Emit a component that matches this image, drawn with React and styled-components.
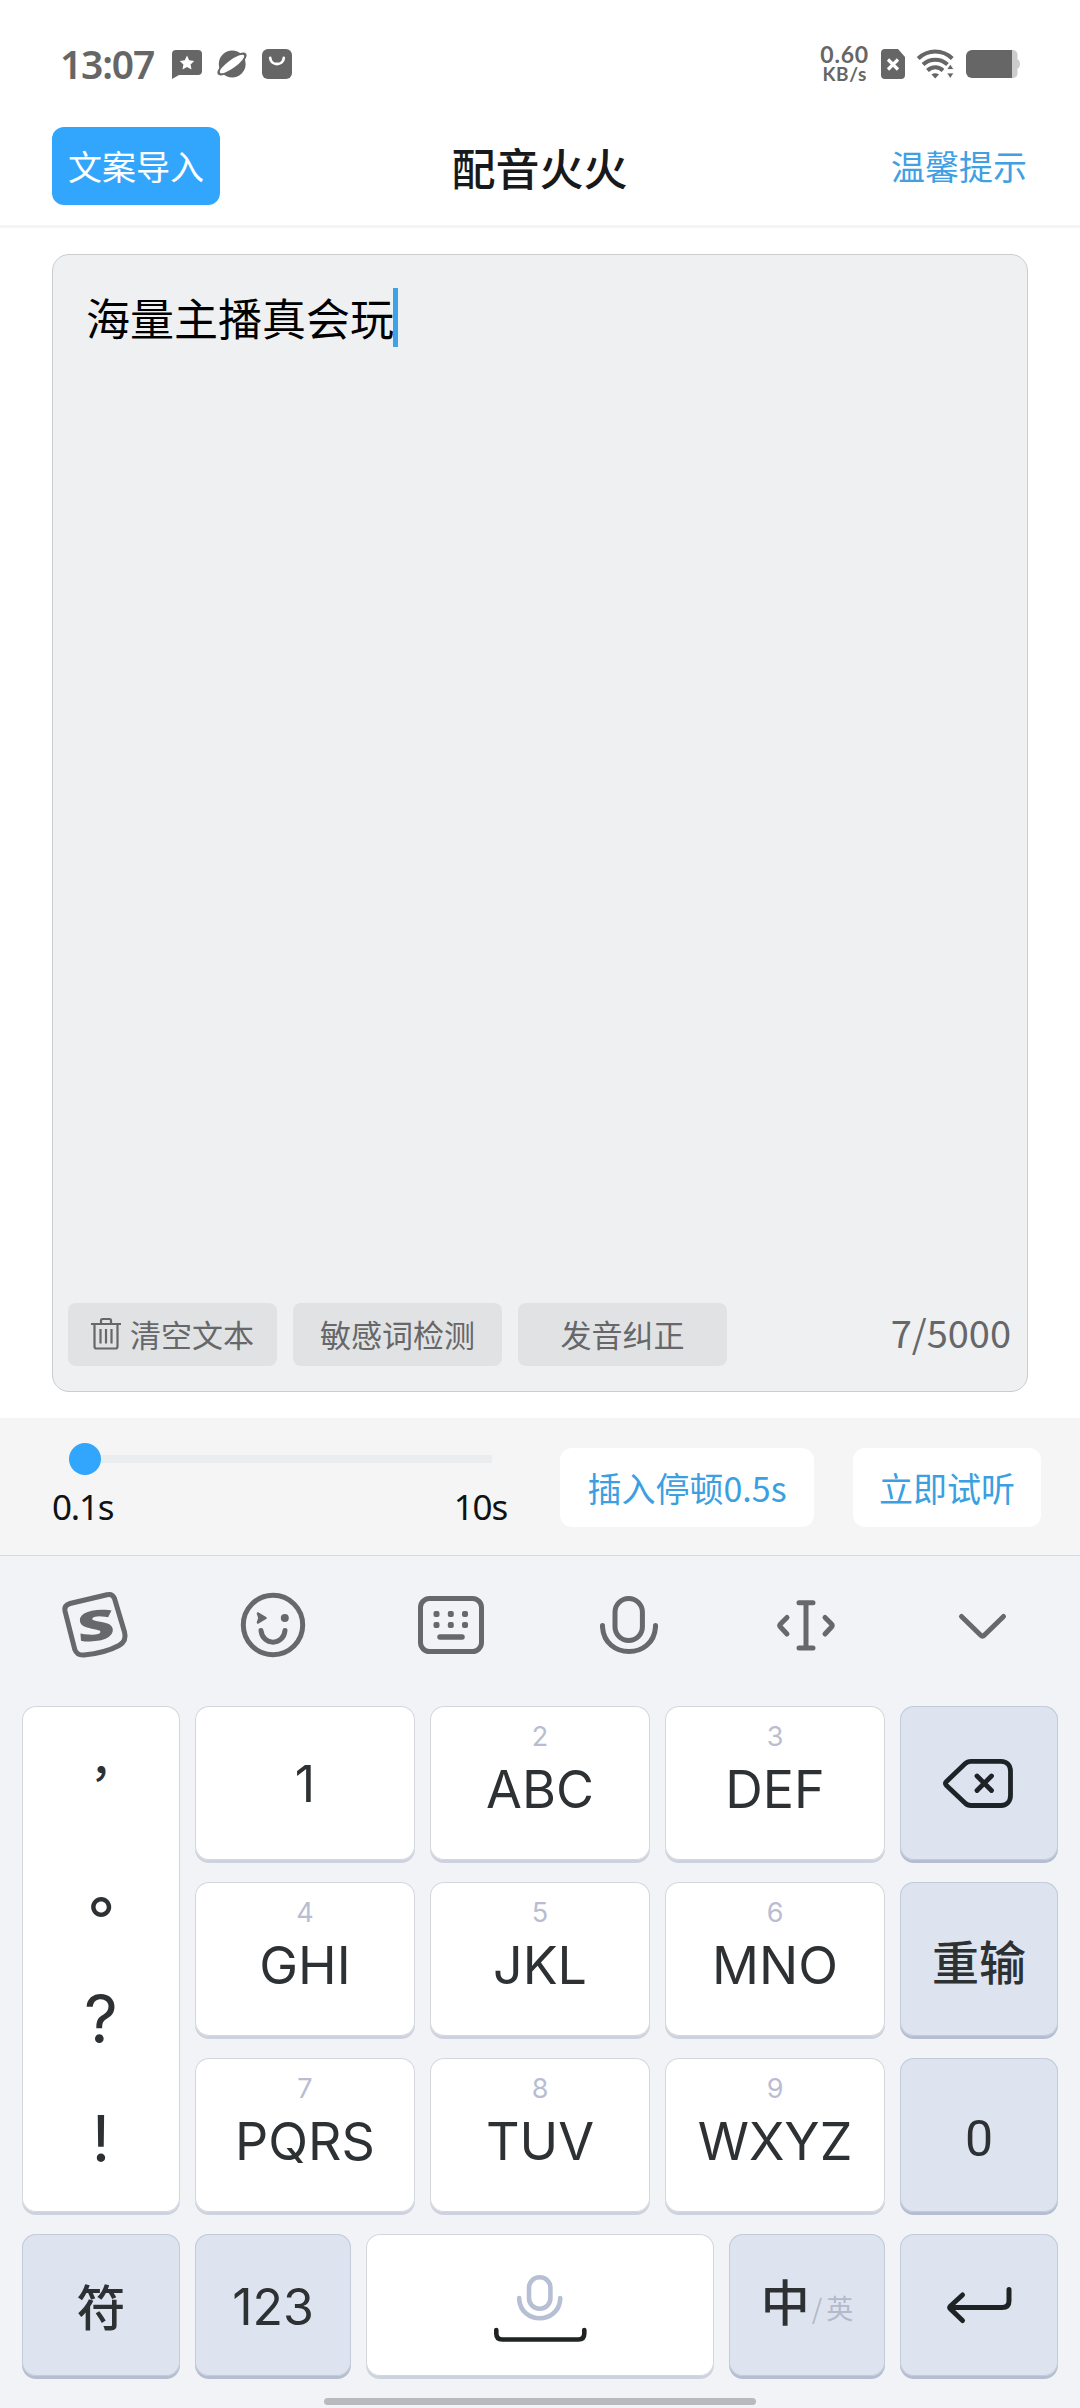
import React from 'react';
import styled, { createGlobalStyle } from 'styled-components';

const GlobalStyle = createGlobalStyle`
  * {
    box-sizing: border-box;
  }

  body {
    margin: 0;
    background: #fff;
    font-family: 'Noto Sans CJK SC', sans-serif;
  }
`;

const Screen = styled.div`
  width: 1080px;
  height: 2408px;
  display: flex;
  flex-direction: column;
  overflow: hidden;
`;

const Icon = styled.svg`
  display: block;
  flex: none;
  overflow: visible;
`;

/* status bar */

const StatusBar = styled.div`
  height: 107px;
  padding: 21px 60px 0 60px;
  display: flex;
  align-items: center;
  justify-content: space-between;
  color: #666;
`;

const StatusGroup = styled.div`
  display: flex;
  align-items: center;
  gap: ${(props) => props.$gap}px;
`;

const Clock = styled.span`
  width: 97px;
  font-family: 'Noto Sans', sans-serif;
  font-size: 39px;
  font-weight: 600;
  line-height: 40px;
  letter-spacing: -1.2px;
  white-space: nowrap;
`;

const NetSpeed = styled.div`
  display: flex;
  flex-direction: column;
  align-items: center;
  font-family: Lato, sans-serif;
  font-weight: 700;
  white-space: nowrap;
`;

const SpeedValue = styled.span`
  font-size: 23px;
  line-height: 20px;
  letter-spacing: 0.8px;
`;

const SpeedUnit = styled.span`
  font-size: 19px;
  line-height: 20px;
  letter-spacing: 0.6px;
`;

/* page header */

const Header = styled.header`
  height: 121px;
  padding: 0 53px 0 52px;
  display: grid;
  grid-template-columns: 1fr auto 1fr;
  align-items: center;
  border-bottom: 3px solid #f5f5f5;
`;

const ImportButton = styled.button`
  width: 168px;
  height: 78px;
  padding: 0;
  border: none;
  border-radius: 12px;
  background: #32a6fd;
  color: #fff;
  font-family: inherit;
  font-size: 34px;
  line-height: 40px;
`;

const Title = styled.h1`
  margin: 1px 0 0;
  color: #18191b;
  font-size: 44px;
  font-weight: 500;
  line-height: 50px;
`;

const TipLink = styled.a`
  justify-self: end;
  color: #3fa0e3;
  font-size: 34px;
  line-height: 40px;
`;

/* editor */

const Main = styled.main`
  padding: 26px 52px;
`;

const Editor = styled.section`
  height: 1138px;
  padding: 33px 15px 25px;
  display: flex;
  flex-direction: column;
  justify-content: space-between;
  border: 1px solid #cbccce;
  border-radius: 17px;
  background: #eff0f2;
`;

const EditorText = styled.div`
  height: 59px;
  padding-left: 18px;
  display: flex;
  align-items: center;
  color: #000;
  font-size: 44px;
  line-height: 61px;
`;

const Caret = styled.span`
  width: 5px;
  height: 59px;
  margin-left: -1px;
  background: #3ea2e8;
`;

const EditorFooter = styled.div`
  display: flex;
  align-items: center;
  gap: 16px;
`;

const ToolButton = styled.button`
  width: 209px;
  height: 63px;
  padding: 0 0 1px;
  display: flex;
  align-items: center;
  justify-content: center;
  gap: 9px;
  border: none;
  border-radius: 8px;
  background: #e1e2e4;
  color: #666769;
  font-family: inherit;
  font-size: 31px;
  line-height: 36px;
`;

const Counter = styled.span`
  margin: 0 1px 5px auto;
  color: #666769;
  font-size: 38px;
  line-height: 44px;
`;

/* pause controls */

const PauseBar = styled.section`
  height: 137px;
  padding: 25px 39px 0 52px;
  display: flex;
  background: #f5f5f6;
`;

const SliderBlock = styled.div`
  width: 455px;
  margin-right: 53px;
`;

const Track = styled.div`
  width: 423px;
  height: 32px;
  margin-left: 17px;
  display: flex;
  align-items: center;
  background: linear-gradient(#ebecee, #ebecee) center / 100% 8px no-repeat;
`;

const Thumb = styled.div`
  width: 32px;
  height: 32px;
  border-radius: 50%;
  background: #32a6fd;
`;

const Range = styled.div`
  display: flex;
  justify-content: space-between;
  margin-top: 11px;
  color: #111213;
  font-family: 'Noto Sans', sans-serif;
  font-size: 35px;
  line-height: 42px;
  letter-spacing: -1.2px;
`;

const WhiteButton = styled.button`
  width: ${(props) => props.$width}px;
  height: 79px;
  margin: 5px ${(props) => props.$after || 0}px 0 0;
  padding: 0;
  border: none;
  border-radius: 12px;
  background: #fff;
  color: #3b9fe2;
  font-family: inherit;
  font-size: 34px;
  line-height: 40px;
  white-space: nowrap;
`;

/* keyboard */

const Keyboard = styled.section`
  flex: 1;
  display: flex;
  flex-direction: column;
  align-items: center;
  border-top: 1px solid #d7dade;
  background: #f1f3f7;
`;

const KeyboardTools = styled.div`
  width: 1068px;
  height: 138px;
  display: grid;
  grid-template-columns: repeat(6, 1fr);
  place-items: center;
  color: #66686c;
`;

const Keys = styled.div`
  width: 1036px;
  margin-top: 12px;
  display: grid;
  grid-template-columns: 158px 220px 220px 220px 158px;
  grid-auto-rows: 154px;
  gap: 22px 15px;
`;

const KeyRow = styled.div`
  width: 1036px;
  margin-top: 22px;
  display: grid;
  grid-template-columns: 158px 156px 348px 156px 158px;
  grid-auto-rows: 142px;
  gap: 15px;
`;

const Key = styled.div`
  display: flex;
  flex-direction: column;
  align-items: center;
  justify-content: center;
  border-radius: 14px;
  background: ${(props) => (props.$dark ? '#dee4ef' : '#fff')};
  box-shadow: inset 0 0 0 1px ${(props) => (props.$dark ? '#c3cad8' : '#d3d6dc')},
    0 3px 0 0 ${(props) => (props.$dark ? '#b5bed1' : '#ccd3df')};
  color: #2e3133;
`;

const PunctuationKey = styled(Key)`
  grid-row: span 3;
  display: grid;
  grid-template-rows: 129px 137px 94px 146px;
  place-items: center;
`;

const Punctuation = styled.span`
  font-family: ${(props) => (props.$wide ? "'Noto Sans CJK TC'" : 'Inter')}, sans-serif;
  font-size: ${(props) => props.$size}px;
  font-weight: ${(props) => props.$weight || 400};
  line-height: 70px;
`;

const LetterKey = styled(Key)`
  justify-content: flex-start;
  padding-top: 15px;
`;

const Hint = styled.span`
  color: #b9bdd2;
  font-family: Inter, sans-serif;
  font-size: 27px;
  line-height: 32px;
`;

const Letters = styled.span`
  margin-top: 6px;
  font-family: Inter, sans-serif;
  font-size: 52px;
  line-height: 62px;
`;

const Digits = styled.span`
  padding-top: ${(props) => props.$drop || 2}px;
  font-family: ${(props) => props.$font || 'Inter'}, sans-serif;
  font-size: 50px;
  font-weight: ${(props) => props.$weight || 400};
  line-height: 60px;
`;

const HanLabel = styled.span`
  padding-top: ${(props) => props.$drop || 0}px;
  font-size: ${(props) => props.$size}px;
  font-weight: 500;
  line-height: 56px;
`;

const LanguageLabel = styled.div`
  display: flex;
  align-items: flex-start;
  margin-bottom: 10px;
`;

const OtherLanguage = styled.span`
  margin: 21px 0 0 2px;
  display: flex;
  gap: 4px;
  color: #b3bacb;
  font-size: 27px;
  line-height: 30px;
`;

const HomeBar = styled.div`
  width: 432px;
  height: 7px;
  margin-top: 22px;
  border-radius: 4px;
  background: #b8babf;
`;

const letterRows = [
  [
    ['', '1'],
    ['2', 'ABC'],
    ['3', 'DEF'],
  ],
  [
    ['4', 'GHI'],
    ['5', 'JKL'],
    ['6', 'MNO'],
  ],
  [
    ['7', 'PQRS'],
    ['8', 'TUV'],
    ['9', 'WXYZ'],
  ],
];

function MessageIcon() {
  return (
    <Icon width="30" height="29" viewBox="0 0 30 29">
      <path d="M4 0h22a4 4 0 0 1 4 4v17a4 4 0 0 1-4 4H7l-7 4V4a4 4 0 0 1 4-4z" fill="#666" />
      <path
        d="M15 5.6l2.2 4.6 5 .7-3.6 3.5.9 5L15 17l-4.5 2.4.9-5-3.6-3.5 5-.7z"
        fill="#fff"
      />
    </Icon>
  );
}

function PlanetIcon() {
  return (
    <Icon width="30" height="28" viewBox="0 0 30 28">
      <circle cx="15.2" cy="14" r="13.4" fill="#666" />
      <g transform="rotate(-36 15 14)">
        <ellipse cx="15" cy="14" rx="17.5" ry="6" fill="#666" />
        <ellipse cx="15" cy="14" rx="14.8" ry="4" fill="#fff" />
      </g>
    </Icon>
  );
}

function BagIcon() {
  return (
    <Icon width="30" height="30" viewBox="0 0 30 30">
      <rect width="30" height="30" rx="6" fill="#666" />
      <path d="M8.2 9c.6 8 13 8 13.6 0" fill="none" stroke="#fff" strokeWidth="2.8" strokeLinecap="round" />
    </Icon>
  );
}

function SimIcon() {
  return (
    <Icon width="24" height="30" viewBox="0 0 24 30">
      <path d="M4 0h13l7 8v18a4 4 0 0 1-4 4H4a4 4 0 0 1-4-4V4a4 4 0 0 1 4-4z" fill="#666" />
      <path d="M7 10.5l10 10M17 10.5l-10 10" stroke="#fff" strokeWidth="3.2" />
    </Icon>
  );
}

function WifiIcon() {
  return (
    <Icon width="37" height="30" viewBox="0 0 37 30">
      <g fill="none" stroke="#666" strokeWidth="4">
        <path d="M1.2 9.5C11 .2 25.5.2 35.3 9.5" />
        <path d="M6 15.5c7-6.5 17.5-6.5 24.5 0" />
        <path d="M10.5 21.5c4.5-4.2 11-4.2 15.5 0" />
      </g>
      <path d="M14.5 25.5c2.2-1.7 5.2-1.7 7.5 0L18.2 29.5z" fill="#666" />
      <path d="M33.3 15l3.6 5.5h-7.2zM33.3 29.5l-3.6-5.5h7.2z" fill="#666" stroke="#fff" strokeWidth="0.8" />
    </Icon>
  );
}

function BatteryIcon() {
  return (
    <Icon width="54" height="28" viewBox="0 0 54 28">
      <path d="M46 0c4 0 5.5 2 5.5 5v4.5c3.3.6 3.3 8.4 0 9V23c0 3-1.5 5-5.5 5z" fill="#ccc" />
      <path d="M6 0h40v28H6a6 6 0 0 1-6-6V6a6 6 0 0 1 6-6z" fill="#666" />
    </Icon>
  );
}

function TrashIcon() {
  return (
    <Icon width="30" height="32" viewBox="0 0 30 32" fill="none" stroke="#666769" strokeWidth="2.2">
      <path d="M0 6h30M10 6V2.5a1.5 1.5 0 0 1 1.5-1.5h7a1.5 1.5 0 0 1 1.5 1.5V6" />
      <path d="M3.5 6v22.5a2 2 0 0 0 2 2h19a2 2 0 0 0 2-2V6" />
      <path d="M9.5 11v14.5M15 11v14.5M20.5 11v14.5" />
    </Icon>
  );
}

function SogouIcon() {
  return (
    <Icon width="66" height="66" viewBox="0 0 66 66">
      <path
        d="M8 11.5L45 2.8Q50.5 1.5 52.5 6.5L62.5 40Q65 49 57 53.5Q43 61 22 63Q15 63.5 12.8 57.5L3 19Q1.8 13.5 8 11.5z"
        fill="none"
        stroke="currentColor"
        strokeWidth="5"
      />
      <text
        transform="translate(34 33.5) rotate(-6) skewX(-2) scale(1.55 1)"
        y="15"
        textAnchor="middle"
        fontFamily="Open Sans, sans-serif"
        fontSize="42"
        fontWeight="800"
        fill="currentColor"
      >
        S
      </text>
    </Icon>
  );
}

function SmileIcon() {
  return (
    <Icon width="66" height="66" viewBox="0 0 66 66" fill="none" stroke="currentColor" strokeWidth="5" strokeLinecap="round">
      <circle cx="33" cy="33" r="29.7" />
      <path d="M18 21.5l7.5 4.5-7.5 4.5 1.5-4.5z" fill="currentColor" strokeWidth="2.5" strokeLinejoin="round" />
      <circle cx="44.8" cy="26" r="4" fill="currentColor" stroke="none" />
      <path d="M21 38.5c1.5 15.5 22.5 15.5 24 0" />
    </Icon>
  );
}

function KeypadIcon() {
  return (
    <Icon width="66" height="58" viewBox="0 0 66 58">
      <rect x="2.5" y="2.5" width="61" height="53" rx="9" fill="none" stroke="currentColor" strokeWidth="5" />
      {[15.5, 29.8, 44].map((x) =>
        [15, 26].map((y) => (
          <rect key={`${x}-${y}`} x={x} y={y} width="6" height="6" rx="2" fill="currentColor" />
        ))
      )}
      <path d="M22 41h22" stroke="currentColor" strokeWidth="5.5" strokeLinecap="round" />
    </Icon>
  );
}

function MicIcon() {
  return (
    <Icon width="58" height="58" viewBox="0 0 58 58" fill="none" stroke="currentColor" strokeWidth="5" strokeLinecap="round">
      <rect x="15" y="2.5" width="27.4" height="42" rx="13.7" />
      <path d="M2.5 29.5v1.5c2 32.7 51 32.7 53 0v-1.5" />
    </Icon>
  );
}

function CursorIcon() {
  return (
    <Icon width="60" height="51" viewBox="0 0 60 51" fill="none" stroke="currentColor" strokeWidth="5" strokeLinecap="round" strokeLinejoin="round">
      <path d="M22 2.8h14M22 48h14M29 2.8V48" />
      <path d="M10 17.5L3.5 24q-1.5 1.5 0 3L10 34M48 17.5l6.5 6.5q1.5 1.5 0 3L48 34" />
    </Icon>
  );
}

function ChevronIcon() {
  return (
    <Icon width="52" height="23" viewBox="0 0 52 23">
      <path d="M2.5 2.5l19 18.500q2 2 4 0l19-18.500" fill="none" stroke="currentColor" strokeWidth="5" strokeLinecap="round" />
    </Icon>
  );
}

function BackspaceIcon() {
  return (
    <Icon width="72" height="49" viewBox="0 0 72 49" fill="none" stroke="#1d2326" strokeWidth="4.8" strokeLinecap="round" strokeLinejoin="round">
      <path d="M28 2.3h30c6 0 9.5 4 9.5 10v24c0 6-3.5 10.2-9.5 10.2H28c-2.5 0-4.5-1-6-2.5L3.5 26.5q-2-2 0-4L22 4.8c1.5-1.5 3.5-2.5 6-2.5z" />
      <path d="M34 17l14.5 14.5M48.5 17L34 31.5" />
    </Icon>
  );
}

function SpaceIcon() {
  return (
    <Icon width="92" height="60" viewBox="0 0 92 60" fill="none" strokeLinecap="round">
      <g stroke="#b7bfd5" strokeWidth="4.6">
        <rect x="35" y="2.3" width="21.4" height="31.4" rx="10.5" />
        <path d="M25.2 23v1.5c2 25 39 25 41 0V23" />
      </g>
      <path d="M2.3 55v3.500q0 6 6 6h76q6 0 6-6V55" stroke="#202324" strokeWidth="4.6" />
    </Icon>
  );
}

function EnterIcon() {
  return (
    <Icon width="65" height="36" viewBox="0 0 65 36" fill="none" stroke="#202324" strokeWidth="5" strokeLinecap="round" strokeLinejoin="round">
      <path d="M62 2.5v11.5q0 6.5-7 6.5H5" />
      <path d="M15.5 8L3.500 19q-1.500 1.500 0 3l12 11.500" />
    </Icon>
  );
}

function App() {
  return (
    <Screen>
      <GlobalStyle />
      <StatusBar>
        <StatusGroup $gap={15}>
          <Clock>13:07</Clock>
          <MessageIcon />
          <PlanetIcon />
          <BagIcon />
        </StatusGroup>
        <StatusGroup $gap={12}>
          <NetSpeed>
            <SpeedValue>0.60</SpeedValue>
            <SpeedUnit>KB/s</SpeedUnit>
          </NetSpeed>
          <SimIcon />
          <WifiIcon />
          <BatteryIcon />
        </StatusGroup>
      </StatusBar>

      <Header>
        <ImportButton>文案导入</ImportButton>
        <Title>配音火火</Title>
        <TipLink>温馨提示</TipLink>
      </Header>

      <Main>
        <Editor>
          <EditorText>
            海量主播真会玩
            <Caret />
          </EditorText>
          <EditorFooter>
            <ToolButton>
              <TrashIcon />
              清空文本
            </ToolButton>
            <ToolButton>敏感词检测</ToolButton>
            <ToolButton>发音纠正</ToolButton>
            <Counter>7/5000</Counter>
          </EditorFooter>
        </Editor>
      </Main>

      <PauseBar>
        <SliderBlock>
          <Track>
            <Thumb />
          </Track>
          <Range>
            <span>0.1s</span>
            <span>10s</span>
          </Range>
        </SliderBlock>
        <WhiteButton $width={254} $after={39}>插入停顿0.5s</WhiteButton>
        <WhiteButton $width={188}>立即试听</WhiteButton>
      </PauseBar>

      <Keyboard>
        <KeyboardTools>
          <SogouIcon />
          <SmileIcon />
          <KeypadIcon />
          <MicIcon />
          <CursorIcon />
          <ChevronIcon />
        </KeyboardTools>
        <Keys>
          <PunctuationKey>
            <Punctuation $wide $size={44} $weight={500}>，</Punctuation>
            <Punctuation $wide $size={62} $weight={700}>。</Punctuation>
            <Punctuation $size={66}>?</Punctuation>
            <Punctuation $size={64}>!</Punctuation>
          </PunctuationKey>
          {letterRows.map((row, index) => (
            <React.Fragment key={index}>
              {row.map(([hint, letters]) =>
                hint ? (
                  <LetterKey key={letters}>
                    <Hint>{hint}</Hint>
                    <Letters>{letters}</Letters>
                  </LetterKey>
                ) : (
                  <Key key={letters}>
                    <Digits>{letters}</Digits>
                  </Key>
                )
              )}
              <Key $dark>
                {index === 0 && <BackspaceIcon />}
                {index === 1 && <HanLabel $size={47} $drop={2}>重输</HanLabel>}
                {index === 2 && <Digits $font="Roboto" $drop={7}>0</Digits>}
              </Key>
            </React.Fragment>
          ))}
        </Keys>
        <KeyRow>
          <Key $dark>
            <HanLabel $size={49}>符</HanLabel>
          </Key>
          <Key $dark>
            <Digits $drop={3}>123</Digits>
          </Key>
          <Key>
            <SpaceIcon />
          </Key>
          <Key $dark>
            <LanguageLabel>
              <HanLabel $size={49}>中</HanLabel>
              <OtherLanguage>
                <span>/</span>
                <span>英</span>
              </OtherLanguage>
            </LanguageLabel>
          </Key>
          <Key $dark>
            <EnterIcon />
          </Key>
        </KeyRow>
        <HomeBar />
      </Keyboard>
    </Screen>
  );
}

export default App;
